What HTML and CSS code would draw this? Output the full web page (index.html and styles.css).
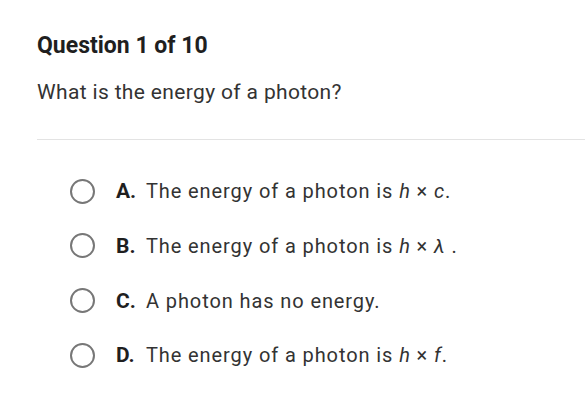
FILE: index.html
```html
<!DOCTYPE html>
<html>
<head>
<meta charset="utf-8">
<link rel="stylesheet" href="styles.css">
</head>
<body>
<div class="page">
  <div class="head">
    <h1 class="title">Question 1 of 10</h1>
    <p class="prompt">What is the energy of a photon?</p>
  </div>
  <hr class="rule">
  <ul class="options">
    <li class="option"><span class="radio"></span><span class="letter">A.</span><span class="text">The energy of a photon is <i>h</i> × <i>c</i>.</span></li>
    <li class="option"><span class="radio"></span><span class="letter">B.</span><span class="text">The energy of a photon is <i>h</i> × <i>λ</i> .</span></li>
    <li class="option"><span class="radio"></span><span class="letter">C.</span><span class="text">A photon has no energy.</span></li>
    <li class="option"><span class="radio"></span><span class="letter">D.</span><span class="text">The energy of a photon is <i>h</i> × <i>f</i>.</span></li>
  </ul>
</div>
</body>
</html>
```
FILE: styles.css
```css
html, body {
  margin: 0;
  padding: 0;
  background: #fff;
}
body {
  font-family: Roboto, "Liberation Sans", sans-serif;
  color: #333;
}
.page {
  width: 585px;
  height: 416px;
  overflow: hidden;
}
.head {
  padding: 32px 0 0 37px;
}
.title {
  margin: 0;
  font-size: 23px;
  font-weight: 700;
  line-height: 28px;
  color: #1f1f1f;
  letter-spacing: 0;
}
.prompt {
  margin: 18px 0 0;
  font-size: 21px;
  letter-spacing: 0.35px;
  line-height: 28px;
  color: #333;
}
.rule {
  margin: 33px 0 0 37px;
  border: 0;
  border-top: 1px solid #e3e3e3;
  height: 0;
}
.options {
  list-style: none;
  margin: 0;
  padding: 37px 0 0 70px;
  display: flex;
  flex-direction: column;
  gap: 26.8px;
}
.option {
  display: flex;
  align-items: center;
  height: 28px;
  font-size: 20px;
}
.radio {
  width: 25px;
  height: 25px;
  border: 2px solid #777;
  border-radius: 50%;
  flex: none;
  box-sizing: border-box;
}
.letter {
  font-weight: 700;
  font-size: 21px;
  margin-left: 21px;
  width: 30px;
  color: #1f1f1f;
}
.text {
  color: #333;
  letter-spacing: 0.9px;
}
.text i {
  font-style: italic;
}
```
